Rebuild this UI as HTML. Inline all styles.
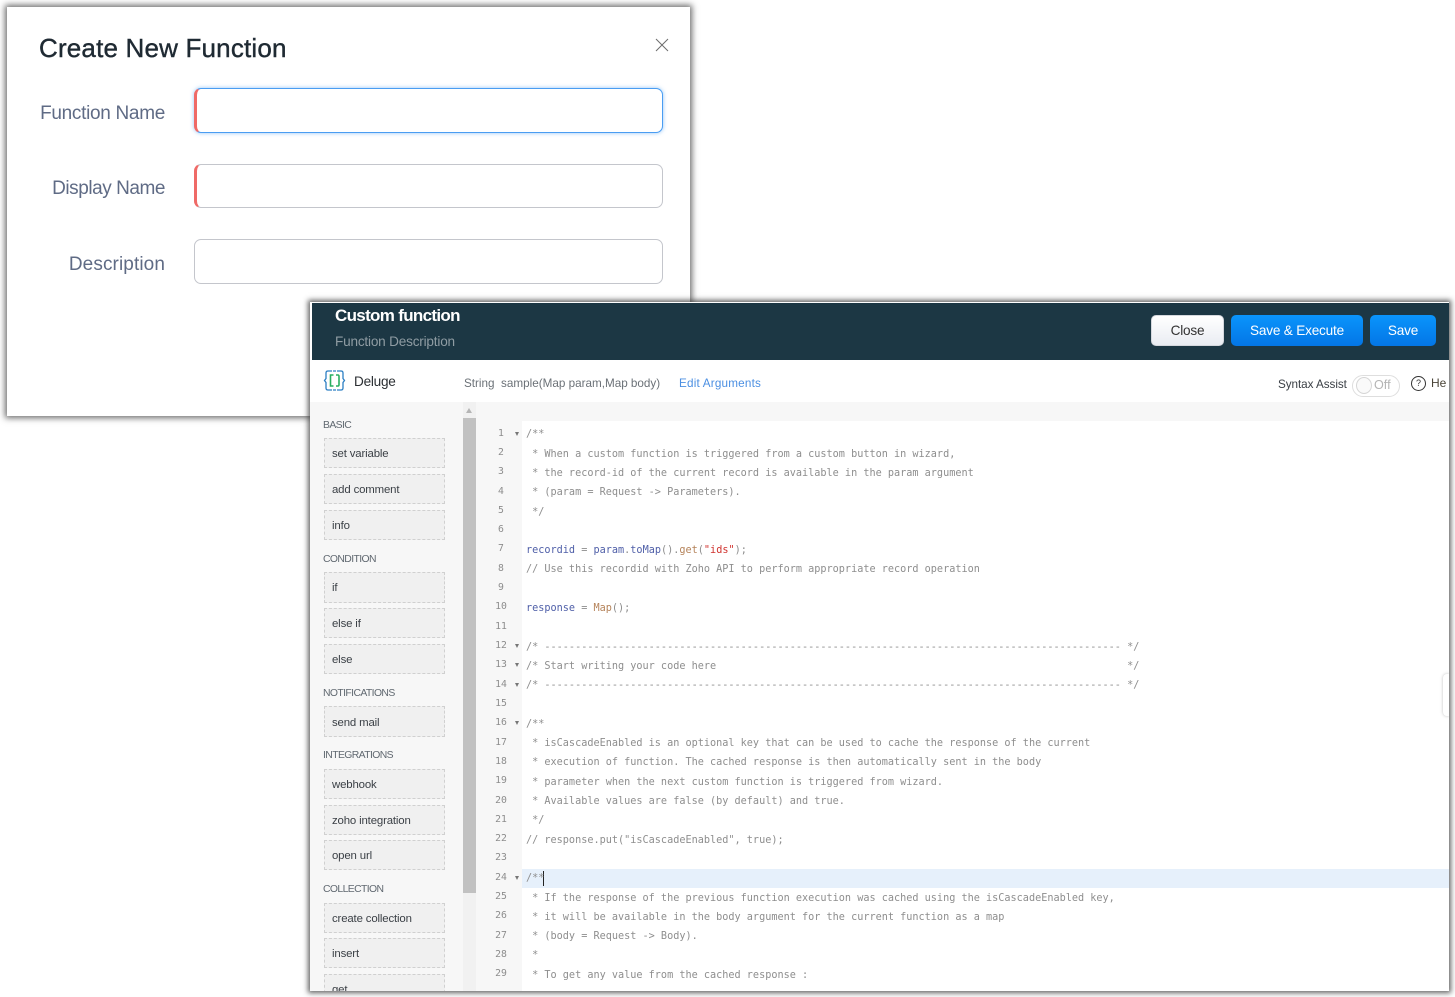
<!DOCTYPE html>
<html><head><meta charset="utf-8"><style>
html,body{margin:0;padding:0;background:#fff;width:1455px;height:997px;overflow:hidden}
body{position:relative;font-family:"Liberation Sans",sans-serif;filter:blur(.3px)}
div,span{position:absolute;white-space:pre;box-sizing:border-box}
.lab{font-size:19px;color:#5f6b85;right:1290px;line-height:24px}
.inp{left:194px;width:469px;background:#fff;border:1px solid #c4c6cc;border-radius:7px}
.red{border-left:3px solid #ef6a67}
.h{left:13px;font-size:10.4px;color:#606870;line-height:14px;letter-spacing:-.6px}
.it{left:14px;width:121px;height:30px;background:#f0f0f0;border:1px dashed #d0d0d0;font-size:11.4px;color:#3a3f45;line-height:31px;padding-left:7px;letter-spacing:-.15px}
.n{left:176px;width:30px;text-align:center;font:9.8px/14px "DejaVu Sans Mono",monospace;color:#8d8d8d}
.f{left:205px;width:0;height:0;border-left:2.5px solid transparent;border-right:2.5px solid transparent;border-top:4px solid #777}
.c{left:216px;font:10.2px/14px "DejaVu Sans Mono",monospace;color:#8e8e8e}
.b{top:315px;height:31px;border-radius:5px;font-size:13.6px;line-height:31px;text-align:center;color:#fff;background:linear-gradient(#0a94fb,#0375e6);letter-spacing:-.2px}
</style></head><body>

<div style="left:7px;top:7px;width:683px;height:409px;background:#fff;box-shadow:0 0 6px 2px rgba(60,60,60,.75)"></div>
<div style="left:39px;top:31px;font-size:26px;line-height:34px;color:#1f2a33;letter-spacing:.18px;-webkit-text-stroke:.4px #1f2a33">Create New Function</div>
<svg style="position:absolute;left:655px;top:38px" width="14" height="14"><path d="M1 1L13 13M13 1L1 13" stroke="#6d6d6d" stroke-width="1" fill="none"/></svg>
<div class="lab" style="top:102px;letter-spacing:-.3px">Function Name</div>
<div class="inp red" style="top:88px;height:45px;border-color:#4a9df2;border-left-color:#ef6a67;box-shadow:0 0 4px rgba(74,157,242,.6)"></div>
<div class="lab" style="top:177px;letter-spacing:-.45px">Display Name</div>
<div class="inp red" style="top:164px;height:44px"></div>
<div class="lab" style="top:253px;letter-spacing:.1px">Description</div>
<div class="inp" style="top:239px;height:45px"></div>

<div style="left:310px;top:302px;width:1139px;height:689px;background:#fff;box-shadow:0 0 5px 2px rgba(60,60,60,.8);overflow:hidden">
  <div style="left:2px;top:1px;width:1137px;height:57px;background:#1c3744"></div>
  <div style="left:25px;top:3px;font-size:17px;font-weight:bold;line-height:22px;color:#fff;letter-spacing:-.68px">Custom function</div>
  <div style="left:25px;top:31px;font-size:13.6px;line-height:18px;color:#8f9ca3;letter-spacing:-.2px">Function Description</div>
  <svg style="position:absolute;left:13px;top:67px" width="23" height="23" viewBox="0 0 23 23" fill="none"><path d="M9 2H5Q3 2 3 4V9.500L1.500 11.500L3 13.500V19Q3 21 5 21H9M14 2H18Q20 2 20 4V9.500L21.500 11.500L20 13.500V19Q20 21 18 21H14M10 2H13M10 21H13" stroke="#2c7fc4" stroke-width="1.300"/><path d="M10.500 6H7.500V17H10.500M13 6H15Q16 6 16 7.500V15.500Q16 17 15 17H13" stroke="#27ae60" stroke-width="1.600"/></svg>
  <div style="left:44px;top:71px;font-size:13.6px;line-height:18px;color:#2b2f33;letter-spacing:-.25px">Deluge</div>
  <div style="left:154px;top:74px;font-size:11.7px;line-height:16px;color:#6b7177;letter-spacing:0">String  sample(Map param,Map body)</div>
  <div style="left:369px;top:74px;font-size:11.7px;line-height:16px;color:#4b8fe2;letter-spacing:.2px">Edit Arguments</div>
  <div style="left:968px;top:75px;font-size:11.7px;line-height:16px;color:#3b4046;letter-spacing:-.05px">Syntax Assist</div>
  <div style="left:1042px;top:73px;width:48px;height:22px;border:1px solid #dedede;border-radius:11px;background:#fff"></div>
  <div style="left:1046px;top:75px;width:16px;height:17px;border:1px solid #d6d6d6;border-radius:50%;background:#fafafa"></div>
  <div style="left:1064px;top:75px;font-size:12.6px;line-height:16px;color:#b4b4b4">Off</div>
  <div style="left:1101px;top:74px;width:15px;height:15px;border:1px solid #333;border-radius:50%;font-size:9px;line-height:13px;text-align:center;color:#333">?</div>
  <div style="left:1121px;top:73px;font-size:12px;line-height:16px;color:#4a4438">He</div>

  <div style="left:0;top:100px;width:1139px;height:19px;background:#f7f7f7"></div>
  <div style="left:0;top:100px;width:169px;height:589px;background:#f7f7f7"></div>
  <div style="left:169px;top:100px;width:43px;height:589px;background:#f7f7f7"></div>
  <div style="left:153px;top:100px;width:13px;height:589px;background:#f1f1f1"></div>
  <div style="left:156px;top:106px;width:0;height:0;border-left:3.500px solid transparent;border-right:3.500px solid transparent;border-bottom:5px solid #b5b5b5"></div>
  <div style="left:153px;top:116px;width:13px;height:475px;background:#c1c1c1"></div>

  <div class="h" style="top:117px">BASIC</div>
  <div class="it" style="top:136px">set variable</div>
  <div class="it" style="top:172px">add comment</div>
  <div class="it" style="top:208px">info</div>
  <div class="h" style="top:251px">CONDITION</div>
  <div class="it" style="top:270px;height:31px">if</div>
  <div class="it" style="top:306px">else if</div>
  <div class="it" style="top:342px">else</div>
  <div class="h" style="top:385px">NOTIFICATIONS</div>
  <div class="it" style="top:404px;height:31px;line-height:32px">send mail</div>
  <div class="h" style="top:447px">INTEGRATIONS</div>
  <div class="it" style="top:467px">webhook</div>
  <div class="it" style="top:503px">zoho integration</div>
  <div class="it" style="top:538px">open url</div>
  <div class="h" style="top:581px">COLLECTION</div>
  <div class="it" style="top:601px">create collection</div>
  <div class="it" style="top:636px">insert</div>
  <div class="it" style="top:672px">get</div>

  <div style="left:212px;top:567px;width:927px;height:19px;background:#e6f0fb"></div>
  <div style="left:233px;top:569px;width:1px;height:15px;background:#222"></div>
  <div style="left:1133px;top:372px;width:6px;height:42px;background:#fff;border-radius:4px 0 0 4px;box-shadow:0 0 3px rgba(0,0,0,.25)"></div>

  <div class="n" style="top:125px">1</div><div class="f" style="top:130px"></div>
  <div class="n" style="top:144px">2</div>
  <div class="n" style="top:163px">3</div>
  <div class="n" style="top:183px">4</div>
  <div class="n" style="top:202px">5</div>
  <div class="n" style="top:221px">6</div>
  <div class="n" style="top:240px">7</div>
  <div class="n" style="top:260px">8</div>
  <div class="n" style="top:279px">9</div>
  <div class="n" style="top:298px">10</div>
  <div class="n" style="top:318px">11</div>
  <div class="n" style="top:337px">12</div><div class="f" style="top:342px"></div>
  <div class="n" style="top:356px">13</div><div class="f" style="top:361px"></div>
  <div class="n" style="top:376px">14</div><div class="f" style="top:381px"></div>
  <div class="n" style="top:395px">15</div>
  <div class="n" style="top:414px">16</div><div class="f" style="top:419px"></div>
  <div class="n" style="top:434px">17</div>
  <div class="n" style="top:453px">18</div>
  <div class="n" style="top:472px">19</div>
  <div class="n" style="top:492px">20</div>
  <div class="n" style="top:511px">21</div>
  <div class="n" style="top:530px">22</div>
  <div class="n" style="top:549px">23</div>
  <div class="n" style="top:569px">24</div><div class="f" style="top:574px"></div>
  <div class="n" style="top:588px">25</div>
  <div class="n" style="top:607px">26</div>
  <div class="n" style="top:627px">27</div>
  <div class="n" style="top:646px">28</div>
  <div class="n" style="top:665px">29</div>

  <div class="c" style="top:126px">/**</div>
  <div class="c" style="top:146px"> * When a custom function is triggered from a custom button in wizard,</div>
  <div class="c" style="top:165px"> * the record-id of the current record is available in the param argument</div>
  <div class="c" style="top:184px"> * (param = Request -&gt; Parameters).</div>
  <div class="c" style="top:204px"> */</div>
  <div class="c" style="top:242px"><span style="position:static;color:#4f5fa8">recordid</span> = <span style="position:static;color:#4f5fa8">param</span>.<span style="position:static;color:#4f5fa8">toMap</span>().<span style="position:static;color:#b5835a">get</span>(<span style="position:static;color:#d0312d">"ids"</span>);</div>
  <div class="c" style="top:261px">// Use this recordid with Zoho API to perform appropriate record operation</div>
  <div class="c" style="top:300px"><span style="position:static;color:#4f5fa8">response</span> = <span style="position:static;color:#b5835a">Map</span>();</div>
  <div class="c" style="top:339px">/* ---------------------------------------------------------------------------------------------- */</div>
  <div class="c" style="top:358px">/* Start writing your code here                                                                   */</div>
  <div class="c" style="top:377px">/* ---------------------------------------------------------------------------------------------- */</div>
  <div class="c" style="top:416px">/**</div>
  <div class="c" style="top:435px"> * isCascadeEnabled is an optional key that can be used to cache the response of the current</div>
  <div class="c" style="top:454px"> * execution of function. The cached response is then automatically sent in the body</div>
  <div class="c" style="top:474px"> * parameter when the next custom function is triggered from wizard.</div>
  <div class="c" style="top:493px"> * Available values are false (by default) and true.</div>
  <div class="c" style="top:512px"> */</div>
  <div class="c" style="top:532px">// response.put("isCascadeEnabled", true);</div>
  <div class="c" style="top:570px">/**</div>
  <div class="c" style="top:590px"> * If the response of the previous function execution was cached using the isCascadeEnabled key,</div>
  <div class="c" style="top:609px"> * it will be available in the body argument for the current function as a map</div>
  <div class="c" style="top:628px"> * (body = Request -&gt; Body).</div>
  <div class="c" style="top:647px"> *</div>
  <div class="c" style="top:667px"> * To get any value from the cached response :</div>
</div>

<div style="left:1151px;top:315px;width:73px;height:31px;border-radius:5px;background:linear-gradient(#fff,#e9ecf2);border:1px solid #d5d8de;font-size:13.6px;line-height:30px;text-align:center;color:#333;letter-spacing:-.2px">Close</div>
<div class="b" style="left:1231px;width:132px">Save &amp; Execute</div>
<div class="b" style="left:1370px;width:66px">Save</div>
</body></html>
